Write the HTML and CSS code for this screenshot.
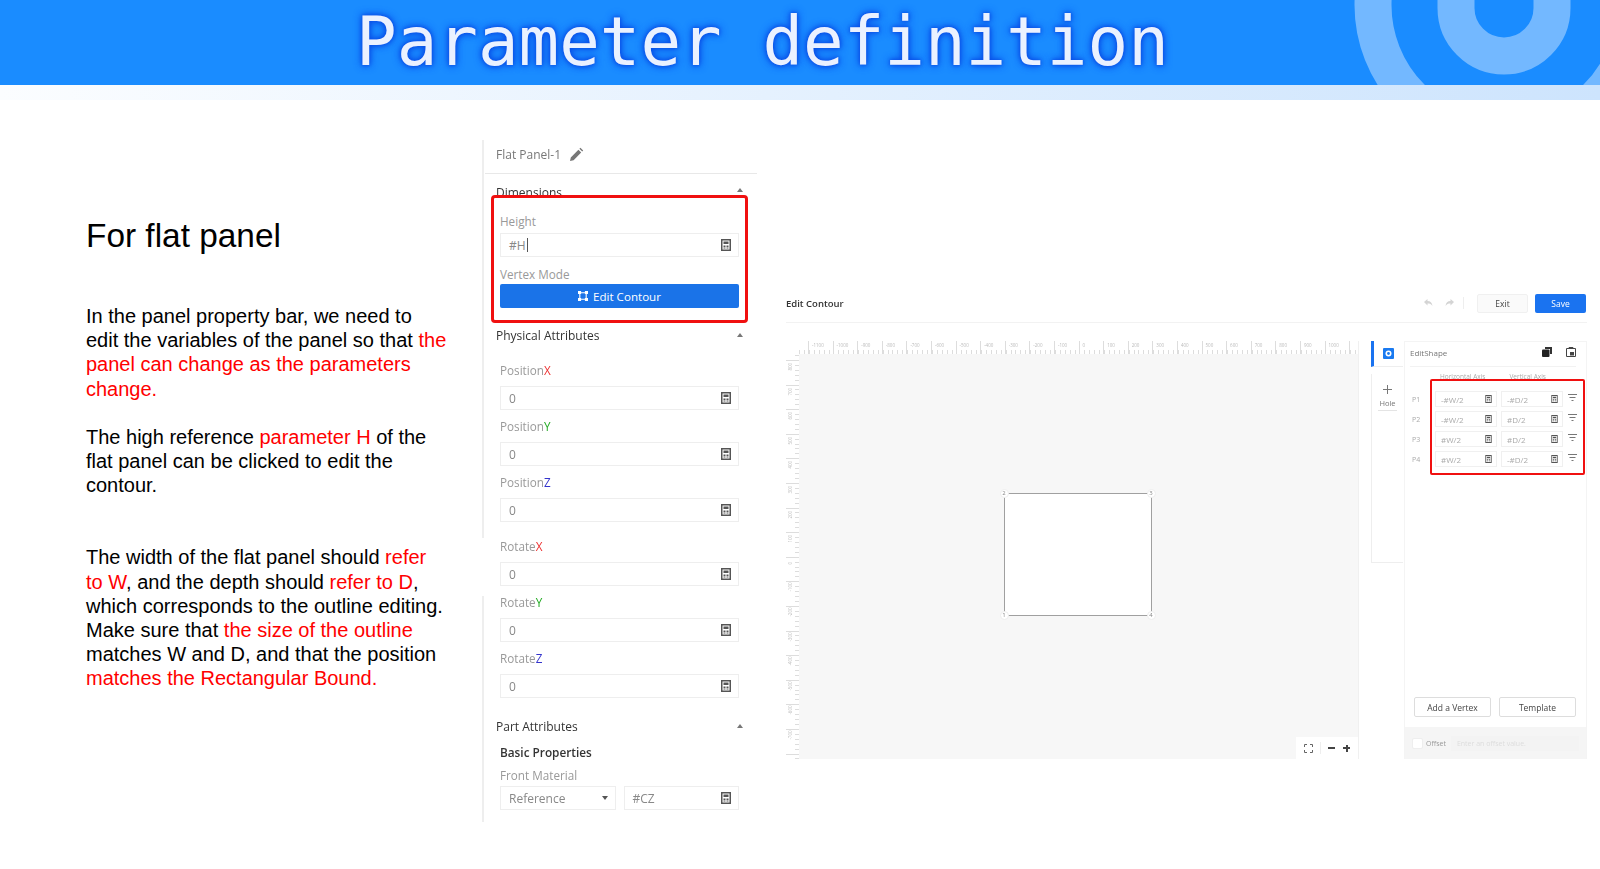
FILE: index.html
```html
<!DOCTYPE html>
<html lang="en">
<head>
    <meta charset="UTF-8">
    <title>Parameter definition</title>
    <link rel="stylesheet" href="styles.css">
</head>
<body>
    <header class="banner">
        <h1>Parameter definition</h1>
        <svg class="banner-art" width="272" height="85" viewBox="0 0 272 85">
            <circle cx="176" cy="5" r="131" fill="none" stroke="#73b8ff" stroke-width="37"/>
            <path d="M128 -10V8A48 48 0 0 0 224 8V-10" fill="none" stroke="#73b8ff" stroke-width="37"/>
        </svg>
    </header>
    <div class="strip"></div>

    <main class="slide">
        <section class="notes">
            <h2>For flat panel</h2>
            <p>In the panel property bar, we need to edit the variables of the panel so that <em>the panel can change as the parameters change.</em></p>
            <p>The high reference <em>parameter H</em> of the flat panel can be clicked to edit the contour.</p>
            <p class="gap">The width of the flat panel should <em>refer to W</em>, and the depth should <em>refer to D</em>, which corresponds to the outline editing. Make sure that <em>the size of the outline</em> matches W and D, and that the position <em>matches the Rectangular Bound.</em></p>
        </section>

        <section class="props">
            <div class="props-title">
                <span>Flat Panel-1</span>
                <svg width="15" height="15" viewBox="0 0 15 15"><path d="M1 14l.8-3.6 7.6-7.6 2.8 2.8-7.6 7.6zM10.4 1.8l1-1 2.8 2.8-1 1z" fill="#777"/></svg>
            </div>
            <div class="sec-head sec-dim"><span>Dimensions</span><i class="caret"></i></div>
            <div class="red-box">
                <label>Height</label>
                <div class="field"><span>#H<b class="cursor"></b></span><svg class="calc" viewBox="0 0 10 12"><use href="#calc"/></svg></div>
                <label class="vertex">Vertex Mode</label>
                <button class="edit-btn">
                    <svg width="10" height="10" viewBox="0 0 11 11"><path d="M2 2h7v7H2z" fill="none" stroke="#fff" stroke-width="1.2"/><path d="M0 0h3.4v3.4H0zM7.6 0H11v3.4H7.6zM0 7.6h3.4V11H0zM7.6 7.6H11V11H7.6z" fill="#fff"/></svg>
                    Edit Contour
                </button>
            </div>

            <div class="sec-head sec-phys"><span>Physical Attributes</span><i class="caret"></i></div>
            <label class="first">Position<span class="x">X</span></label>
            <div class="field"><span>0</span><svg class="calc" viewBox="0 0 10 12"><use href="#calc"/></svg></div>
            <label>Position<span class="y">Y</span></label>
            <div class="field"><span>0</span><svg class="calc" viewBox="0 0 10 12"><use href="#calc"/></svg></div>
            <label>Position<span class="z">Z</span></label>
            <div class="field"><span>0</span><svg class="calc" viewBox="0 0 10 12"><use href="#calc"/></svg></div>
            <label class="rotate">Rotate<span class="x">X</span></label>
            <div class="field"><span>0</span><svg class="calc" viewBox="0 0 10 12"><use href="#calc"/></svg></div>
            <label>Rotate<span class="y">Y</span></label>
            <div class="field"><span>0</span><svg class="calc" viewBox="0 0 10 12"><use href="#calc"/></svg></div>
            <label>Rotate<span class="z">Z</span></label>
            <div class="field"><span>0</span><svg class="calc" viewBox="0 0 10 12"><use href="#calc"/></svg></div>

            <div class="sec-head sec-part"><span>Part Attributes</span><i class="caret"></i></div>
            <div class="basic">Basic Properties</div>
            <label class="front">Front Material</label>
            <div class="material">
                <div class="field"><span>Reference</span><i class="drop"></i></div>
                <div class="field"><span>#CZ</span><svg class="calc" viewBox="0 0 10 12"><use href="#calc"/></svg></div>
            </div>
        </section>

        <section class="editor">
            <div class="editor-top">
                <span class="editor-title">Edit Contour</span>
                <svg class="undo" width="30" height="10" viewBox="0 0 30 10"><path d="M0 4l3.5-3v2c3 0 4.500 1.500 5 5-1.500-2-2.500-2.500-5-2.500v2zM30 4l-3.500-3v2c-3 0-4.500 1.500-5 5 1.500-2 2.500-2.500 5-2.500v2z" fill="#d4d4d4"/></svg>
                <i class="vline"></i>
                <button class="exit">Exit</button>
                <button class="save">Save</button>
            </div>
            <div class="editor-body">
                <div class="canvas">
                    <div class="ruler-h">
                        <span>-1100</span><span>-1000</span><span>-900</span><span>-800</span><span>-700</span><span>-600</span><span>-500</span><span>-400</span><span>-300</span><span>-200</span><span>-100</span><span>0</span><span>100</span><span>200</span><span>300</span><span>400</span><span>500</span><span>600</span><span>700</span><span>800</span><span>900</span><span>1000</span>
                    </div>
                    <div class="canvas-row">
                        <div class="ruler-v">
                            <span>800</span><span>700</span><span>600</span><span>500</span><span>400</span><span>300</span><span>200</span><span>100</span><span>0</span><span>-100</span><span>-200</span><span>-300</span><span>-400</span><span>-500</span><span>-600</span><span>-700</span>
                        </div>
                        <div class="stage">
                            <div class="shape">
                                <i class="pin p1">1</i><i class="pin p2">2</i><i class="pin p3">3</i><i class="pin p4">4</i>
                            </div>
                            <div class="zoom-bar">
                                <svg width="9" height="9" viewBox="0 0 9 9"><path d="M.5 3V.5H3M6 .5h2.500V3M8.500 6v2.500H6M3 8.500H.5V6" fill="none" stroke="#666"/></svg>
                                <i class="vline"></i>
                                <b class="minus"></b>
                                <b class="plus"></b>
                            </div>
                        </div>
                    </div>
                </div>
                <div class="tabs">
                    <div class="tab-active">
                        <svg width="11" height="11" viewBox="0 0 11 11"><rect width="11" height="11" rx="1" fill="#1a7af0"/><circle cx="5.500" cy="5.500" r="3" fill="#fff"/><circle cx="5.500" cy="5.500" r="1.400" fill="#1a7af0"/></svg>
                    </div>
                    <div class="tab-hole">
                        <svg width="9" height="9" viewBox="0 0 9 9"><path d="M4.500 0v9M0 4.500h9" stroke="#777"/></svg>
                        <span>Hole</span>
                    </div>
                </div>
                <div class="shape-panel">
                    <div class="shape-head">
                        <span>EditShape</span>
                        <svg width="10" height="10" viewBox="0 0 10 10"><path d="M3 0h7v7H8V2H3z" fill="#333"/><rect y="2.500" width="7.500" height="7.500" rx="1" fill="#222"/></svg>
                        <svg width="10" height="10" viewBox="0 0 10 10"><path d="M.5 1.500h9v8h-9zM3 1.500V.5h4v1" fill="none" stroke="#444"/><path d="M4 5h4v3.500H4z" fill="#444"/></svg>
                    </div>
                    <div class="axis-head"><span>Horizontal Axis</span><span>Vertical Axis</span></div>
                    <div class="vertex-box">
                        <div class="vrow"><span class="pname">P1</span><div class="cell"><span>-#W/2</span><svg class="calc" viewBox="0 0 10 12"><use href="#calc"/></svg></div><div class="cell"><span>-#D/2</span><svg class="calc" viewBox="0 0 10 12"><use href="#calc"/></svg></div><svg class="filter" viewBox="0 0 9 8"><use href="#filter"/></svg></div>
                        <div class="vrow"><span class="pname">P2</span><div class="cell"><span>-#W/2</span><svg class="calc" viewBox="0 0 10 12"><use href="#calc"/></svg></div><div class="cell"><span>#D/2</span><svg class="calc" viewBox="0 0 10 12"><use href="#calc"/></svg></div><svg class="filter" viewBox="0 0 9 8"><use href="#filter"/></svg></div>
                        <div class="vrow"><span class="pname">P3</span><div class="cell"><span>#W/2</span><svg class="calc" viewBox="0 0 10 12"><use href="#calc"/></svg></div><div class="cell"><span>#D/2</span><svg class="calc" viewBox="0 0 10 12"><use href="#calc"/></svg></div><svg class="filter" viewBox="0 0 9 8"><use href="#filter"/></svg></div>
                        <div class="vrow"><span class="pname">P4</span><div class="cell"><span>#W/2</span><svg class="calc" viewBox="0 0 10 12"><use href="#calc"/></svg></div><div class="cell"><span>-#D/2</span><svg class="calc" viewBox="0 0 10 12"><use href="#calc"/></svg></div><svg class="filter" viewBox="0 0 9 8"><use href="#filter"/></svg></div>
                    </div>
                    <div class="panel-btns"><button>Add a Vertex</button><button>Template</button></div>
                    <div class="offset"><i class="check"></i><span>Offset</span><div class="offset-input">Enter an offset value.</div></div>
                </div>
            </div>
        </section>
    </main>

    <!-- shared icons -->
    <svg class="defs" width="0" height="0">
        <symbol id="calc" viewBox="0 0 10 12">
            <path fill-rule="evenodd" d="M0 0h10v12H0zM1.500 1.500v9h7v-9z" fill="#555"/>
            <path d="M2.500 2.500h5v2.500h-5zM2.500 6.500h2v1.500h-2zM5.500 6.500h2v1.500h-2zM2.500 8.500h2v1h-2zM5.500 8.500h2v1h-2z" fill="#555"/>
        </symbol>
        <symbol id="filter" viewBox="0 0 9 8">
            <path d="M0 .5h9M1.500 3.500h6M3.500 6.500h2" stroke="#777" fill="none"/>
        </symbol>
    </svg>
</body>
</html>
```

FILE: styles.css
```css
* {
    box-sizing: border-box;
}
body {
    margin: 0;
    height: 869px;
    overflow: hidden;
    background-color: #fff;
    font-family: "Open Sans", sans-serif;
}
.defs {
    position: absolute;
}

/* banner */
.banner {
    position: relative;
    height: 85px;
    background-color: #1a8cff;
    overflow: hidden;
    padding-left: 356px;
}
.banner h1 {
    margin: 0;
    font-family: "DejaVu Sans Mono", monospace;
    font-weight: normal;
    font-size: 67.5px;
    line-height: 84px;
    color: #eaf1ff;
    text-shadow: 0 0 3px #0a50e8, 0 0 6px #0a50e8, 0 0 8px #0a50e8;
}
.banner-art {
    position: absolute;
    right: 0;
    top: 0;
}
.strip {
    height: 15px;
    background: linear-gradient(to right, #fbfdff, #cde4fd);
}

/* layout */
.slide {
    display: flex;
    height: 769px;
}

/* left text */
.notes {
    flex: 0 0 482px;
    padding: 116px 0 0 86px;
    font-family: "Liberation Sans", Arial, sans-serif;
    font-size: 20px;
    line-height: 24.2px;
    color: #000;
}
.notes h2 {
    margin: 0 0 48px;
    font-weight: normal;
    font-size: 33.4px;
    line-height: 40px;
}
.notes p {
    margin: 0 0 24px;
    width: 361px;
}
.notes p.gap {
    margin-top: 48px;
}
.notes em {
    font-style: normal;
    color: #f00;
}

/* property bar */
.props {
    flex: 0 0 276px;
    margin-top: 40px;
    height: 682px;
    padding-left: 3px;
    background: linear-gradient(to bottom, #eee 0 398px, transparent 398px 456px, #eee 456px) 0 0 / 2px 100% no-repeat;
    font-size: 12px;
    color: #999;
    filter: blur(.3px);
}
.props-title {
    display: flex;
    align-items: center;
    gap: 8px;
    height: 34px;
    margin-right: 1px;
    padding: 0 0 4px 11px;
    border-bottom: 1px solid #e8e8e8;
    color: #777;
}
.sec-head {
    display: flex;
    justify-content: space-between;
    align-items: center;
    padding: 0 15px 0 11px;
    height: 18px;
    color: #333;
}
.sec-dim {
    margin-top: 10px;
    height: 11px;
    align-items: flex-start;
    line-height: 18px;
}
.sec-phys {
    margin-top: 3px;
}
.sec-part {
    margin-top: 19px;
}
.caret {
    width: 0;
    height: 0;
    border-left: 3.500px solid transparent;
    border-right: 3.500px solid transparent;
    border-bottom: 4px solid #777;
}
.sec-dim .caret {
    margin-top: 4px;
}
label {
    display: block;
    height: 17px;
    line-height: 17px;
    margin: 8px 0 7px 15px;
    font-size: 11.7px;
}
label.first {
    margin-top: 18px;
}
label.rotate {
    margin-top: 16px;
}
label .x {
    color: #e33;
}
label .y {
    color: #2a2;
}
label .z {
    color: #33c;
}
.field {
    display: flex;
    justify-content: space-between;
    align-items: center;
    width: 239px;
    height: 24px;
    margin: 0 0 0 15px;
    padding: 0 7px 0 8px;
    border: 1px solid #eee;
    color: #888;
    font-size: 12px;
}
.calc {
    width: 10px;
    height: 12px;
}
.cursor {
    display: inline-block;
    width: 1px;
    height: 14px;
    margin-left: 1px;
    vertical-align: -2px;
    background-color: #555;
}
.red-box {
    position: relative;
    width: 257px;
    height: 128px;
    margin-left: 6px;
    border: 3px solid #f01010;
    border-radius: 4px;
    background-color: #fff;
    padding-top: 15px;
}
.red-box label {
    margin: 0 0 3px 6px;
}
.red-box .field {
    margin-left: 6px;
}
.red-box label.vertex {
    margin-top: 9px;
    margin-bottom: 1px;
}
.edit-btn {
    display: flex;
    align-items: center;
    justify-content: center;
    gap: 5px;
    width: 239px;
    height: 24px;
    margin-left: 6px;
    border: none;
    border-radius: 2px;
    background-color: #1a73e8;
    color: #fff;
    font-family: inherit;
    font-size: 11.600px;
}
.basic {
    margin: 9px 0 0 15px;
    height: 17px;
    line-height: 17px;
    color: #333;
    font-size: 11.800px;
    font-weight: 600;
}
label.front {
    margin: 6px 0 2px 15px;
}
.material {
    display: flex;
    gap: 8px;
    width: 239px;
    margin-left: 15px;
}
.material .field {
    flex: 1;
    width: auto;
    margin: 0;
}
.drop {
    width: 0;
    height: 0;
    border-left: 3px solid transparent;
    border-right: 3px solid transparent;
    border-top: 4px solid #555;
}

/* contour editor */
.editor {
    flex: 0 0 801px;
    margin: 190px 0 0 28px;
    font-size: 9px;
    color: #999;
    filter: blur(.35px);
}
.editor-top {
    display: flex;
    align-items: center;
    height: 33px;
    border-bottom: 1px solid #f2f2f2;
    padding: 0 1px 6px 0;
}
.editor-title {
    flex: 1;
    color: #333;
    font-size: 9.500px;
    font-weight: 600;
}
.vline {
    display: block;
    width: 1px;
    height: 12px;
    background-color: #eee;
}
.undo {
    margin-right: 9px;
}
.editor-top .vline {
    margin-right: 13px;
}
.exit, .save {
    width: 51px;
    height: 19px;
    border-radius: 2px;
    font-family: inherit;
    font-size: 8.500px;
}
.exit {
    border: 1px solid #f0f0f0;
    background-color: #fafafa;
    color: #444;
    margin-right: 7px;
}
.save {
    border: none;
    background-color: #1a73f0;
    color: #fff;
}
.editor-body {
    display: flex;
    margin-top: 18px;
    height: 418px;
}
.canvas {
    width: 573px;
    display: flex;
    flex-direction: column;
    border-right: 1px solid #f0f0f0;
}
.ruler-h {
    display: flex;
    height: 13px;
    padding-left: 22px;
    font-size: 4.500px;
    color: #bbb;
    overflow: hidden;
    background:
        repeating-linear-gradient(to right, #ddd 0 1px, transparent 1px 24.600px) 22px 0 / 100% 13px no-repeat,
        repeating-linear-gradient(to right, #ddd 0 1px, transparent 1px 4.920px) 13px 9px / 100% 4px no-repeat;
}
.ruler-h span {
    flex: 0 0 24.600px;
    padding-left: 4px;
    line-height: 9px;
    white-space: nowrap;
}
.canvas-row {
    flex: 1;
    display: flex;
}
.ruler-v {
    width: 13px;
    display: flex;
    flex-direction: column;
    font-size: 4.500px;
    color: #bbb;
    overflow: hidden;
    background:
        repeating-linear-gradient(to bottom, #ddd 0 1px, transparent 1px 24.600px) 0 6px / 13px 100% no-repeat,
        repeating-linear-gradient(to bottom, #ddd 0 1px, transparent 1px 4.920px) 9px 1px / 4px 100% no-repeat;
}
.ruler-v span {
    flex: 0 0 24.600px;
    writing-mode: vertical-rl;
    transform: rotate(180deg);
    line-height: 9px;
    text-align: center;
}
.stage {
    flex: 1;
    position: relative;
    display: flex;
    justify-content: center;
    padding-top: 139px;
    background-color: #f7f7f7;
}
.shape {
    position: relative;
    width: 148px;
    height: 123px;
    margin-right: 2px;
    background-color: #fff;
    border: 1px solid #a0a0a0;
}
.pin {
    position: absolute;
    width: 9px;
    height: 9px;
    border-radius: 50%;
    background-color: #fff;
    border: 1px solid #eee;
    font-style: normal;
    font-size: 6px;
    line-height: 7px;
    text-align: center;
    color: #888;
}
.p1 { left: -5px; bottom: -5px; }
.p2 { left: -5px; top: -5px; }
.p3 { right: -5px; top: -5px; }
.p4 { right: -5px; bottom: -5px; }
.zoom-bar {
    position: absolute;
    right: 0;
    bottom: 0;
    width: 62px;
    height: 22px;
    display: flex;
    align-items: center;
    gap: 7px;
    padding-left: 8px;
    background-color: #fff;
}
.minus, .plus {
    position: relative;
    display: block;
    width: 7px;
    height: 2px;
    background-color: #444;
}
.plus {
    margin-left: 1px;
}
.plus::after {
    content: "";
    position: absolute;
    left: 2.500px;
    top: -2.500px;
    width: 2px;
    height: 7px;
    background-color: #444;
}
.tabs {
    width: 32px;
    height: 222px;
    margin-left: 12px;
}
.tab-active {
    display: flex;
    align-items: center;
    justify-content: center;
    height: 26px;
    border-left: 3px solid #1a73f0;
    border-bottom: 1px solid #eee;
}
.tab-hole {
    display: flex;
    flex-direction: column;
    align-items: center;
    height: 189px;
    margin-top: 7px;
    padding-top: 11px;
    gap: 4px;
    border-left: 1px solid #eee;
    border-bottom: 1px solid #eee;
    font-size: 7.500px;
    color: #777;
}
.tab-hole span {
    width: 19px;
    padding-bottom: 2px;
    border-bottom: 1px solid #e4e4e4;
    text-align: center;
}
.shape-panel {
    position: relative;
    width: 183px;
    margin-left: 1px;
    display: flex;
    flex-direction: column;
    border-top: 1px solid #f4f4f4;
    border-right: 1px solid #f4f4f4;
    border-left: 1px solid #f4f4f4;
}
.shape-head {
    display: flex;
    align-items: center;
    gap: 14px;
    height: 25px;
    margin: 0 10px 0 5px;
    padding-bottom: 4px;
    border-bottom: 1px solid #f2f2f2;
    color: #777;
    font-size: 8px;
}
.shape-head span {
    flex: 1;
}
.axis-head {
    display: flex;
    gap: 24px;
    height: 9px;
    padding-left: 35px;
    margin-top: 5px;
    font-size: 6.500px;
    line-height: 9px;
    color: #aaa;
}
.vertex-box {
    position: relative;
    display: flex;
    flex-direction: column;
    gap: 4px;
    width: 155px;
    height: 96px;
    margin-left: 25px;
    margin-top: -2px;
    padding-top: 10px;
    border: 2px solid #f01010;
    border-radius: 2px;
    background-color: #fff;
}
.vrow {
    position: relative;
    display: flex;
    align-items: center;
    gap: 4px;
    height: 16px;
    padding-left: 3px;
}
.pname {
    position: absolute;
    left: -20px;
    font-size: 7px;
    color: #aaa;
}
.cell {
    display: flex;
    align-items: center;
    justify-content: space-between;
    width: 62px;
    height: 16px;
    padding: 0 4px 0 5px;
    border: 1px solid #f0f0f0;
    font-size: 8px;
    color: #aaa;
}
.cell .calc {
    width: 7px;
    height: 8px;
}
.filter {
    width: 9px;
    height: 8px;
    margin: -3px 0 0 1px;
}
.panel-btns {
    display: flex;
    gap: 8px;
    margin-top: auto;
    padding: 0 9px;
}
.panel-btns button {
    width: 77px;
    height: 20px;
    border: 1px solid #ddd;
    border-radius: 2px;
    background-color: #fff;
    color: #444;
    font-family: inherit;
    font-size: 8.500px;
}
.offset {
    display: flex;
    align-items: center;
    gap: 3px;
    height: 32px;
    margin-top: 10px;
    padding: 0 7px;
    background-color: #f5f5f5;
    font-size: 7px;
    color: #999;
}
.check {
    width: 11px;
    height: 11px;
    border: 1px solid #eee;
    border-radius: 2px;
    background-color: #fff;
}
.offset-input {
    flex: 1;
    margin-left: 2px;
    padding-left: 6px;
    height: 15px;
    line-height: 15px;
    color: #ddd;
    background-color: #f3f3f3;
}
```
